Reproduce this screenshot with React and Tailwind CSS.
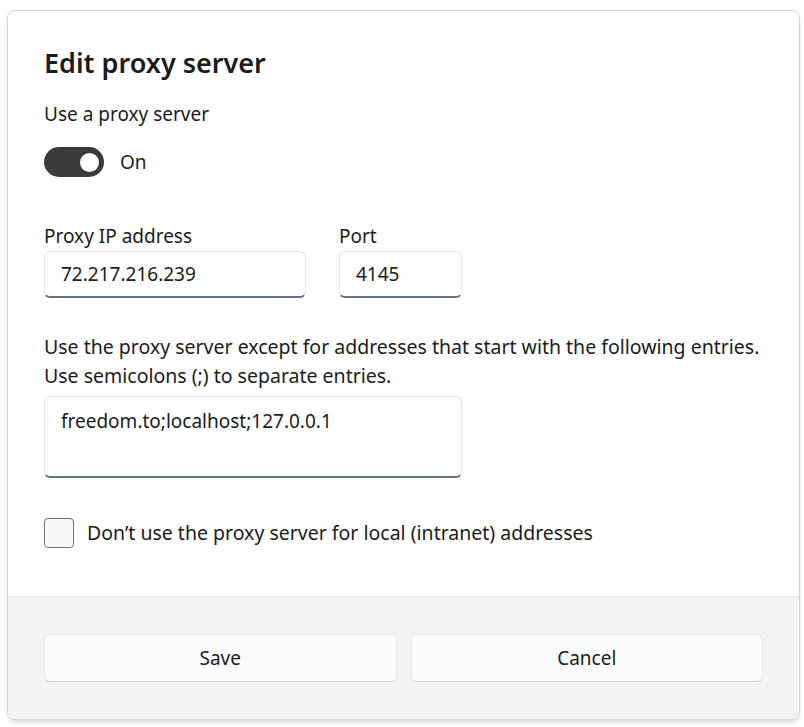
import React, { useState } from "react";

const App = () => {
  const [on, setOn] = useState(true);
  const [checked, setChecked] = useState(false);

  return (
    <div className="w-[804px] h-[727px] bg-white relative overflow-hidden" style={{ fontFamily: '"Noto Sans", "Open Sans", sans-serif' }}>
      <div className="absolute left-[7px] top-[10px] w-[793px] h-[710px] bg-white rounded-lg border border-gray-300 flex flex-col overflow-hidden shadow-md">
        <div className="flex-1 pl-[36px] pt-[32px] text-[#1b1b1b]">
          <h1 className="text-[27px] font-semibold leading-[40px]">Edit proxy server</h1>
          <div className="mt-[18px] text-[19px] leading-[26px]">Use a proxy server</div>
          <div className="mt-[20px] flex items-center gap-[16px]">
            <button
              onClick={() => setOn(!on)}
              className="w-[60px] h-[30px] rounded-full bg-[#3a3a3a] flex items-center px-[5px] justify-end"
            >
              <span className="w-[19px] h-[19px] rounded-full bg-white" />
            </button>
            <span className="text-[19px]">On</span>
          </div>
          <div className="mt-[46px] flex gap-[33px]">
            <div className="flex flex-col">
              <label className="text-[19px] leading-[26px] mb-[2px]">Proxy IP address</label>
              <input defaultValue="72.217.216.239" className="w-[262px] h-[47px] rounded-md border border-gray-200 border-b-2 border-b-gray-500 px-[16px] text-[19px] outline-none" />
            </div>
            <div className="flex flex-col">
              <label className="text-[19px] leading-[26px] mb-[2px]">Port</label>
              <input defaultValue="4145" className="w-[123px] h-[47px] rounded-md border border-gray-200 border-b-2 border-b-gray-500 px-[16px] text-[19px] outline-none" />
            </div>
          </div>
          <p className="mt-[34px] text-[19.5px] leading-[29px]">
            Use the proxy server except for addresses that start with the following entries.
            <br />
            Use semicolons (;) to separate entries.
          </p>
          <textarea
            defaultValue="freedom.to;localhost;127.0.0.1"
            className="mt-[6px] block w-[418px] h-[82px] rounded-md border border-gray-200 border-b-2 border-b-gray-500 px-[16px] py-[10px] text-[19px] resize-none outline-none"
          />
          <label className="mt-[40px] flex items-center gap-[13px] text-[19.5px]">
            <span
              onClick={() => setChecked(!checked)}
              className="w-[30px] h-[30px] rounded-[4px] border border-gray-500 bg-[#f9f9f9]"
            />
            Don’t use the proxy server for local (intranet) addresses
          </label>
        </div>
        <div className="h-[123px] bg-[#f3f3f3] border-t border-gray-200 flex items-center gap-[14px] px-[36px]">
          <button className="flex-1 h-[48px] rounded-md bg-[#fbfbfb] border border-gray-200 border-b-gray-300 text-[19px] text-[#1b1b1b]">Save</button>
          <button className="flex-1 h-[48px] rounded-md bg-[#fbfbfb] border border-gray-200 border-b-gray-300 text-[19px] text-[#1b1b1b]">Cancel</button>
        </div>
      </div>
    </div>
  );
};

export default App;
